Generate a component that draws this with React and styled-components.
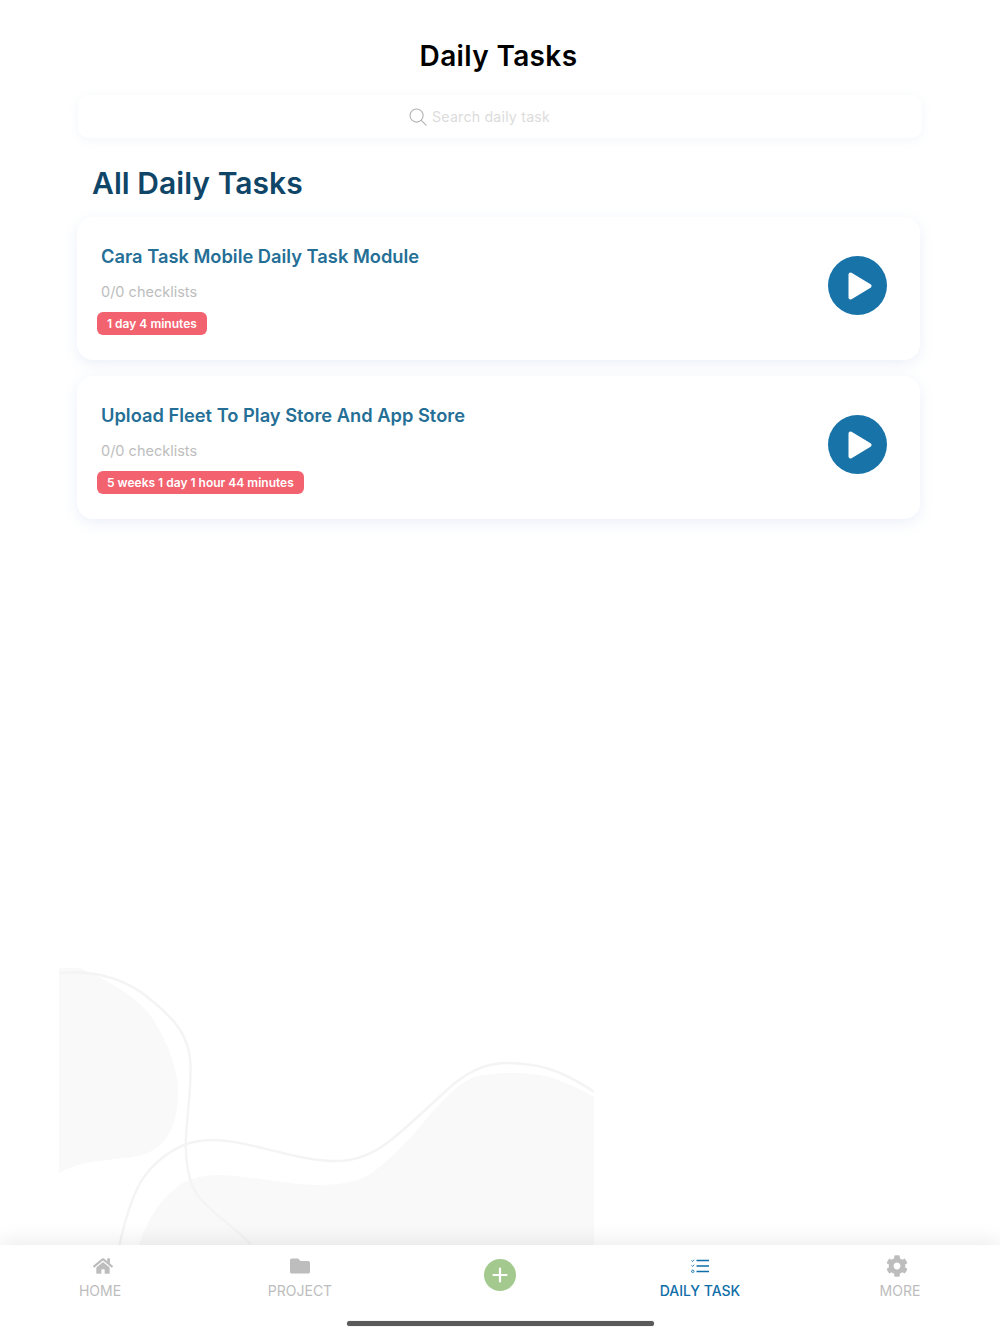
import React from "react";
import styled, { createGlobalStyle } from "styled-components";
import { FaHome, FaFolder, FaCog } from "react-icons/fa";

const GlobalStyle = createGlobalStyle`
  html, body {
    margin: 0;
    padding: 0;
    background: #fff;
    font-family: Inter, "Noto Sans", sans-serif;
  }
`;

const Page = styled.div`
  position: relative;
  width: 1000px;
  height: 1334px;
  overflow: hidden;
  display: flex;
  flex-direction: column;
  background: #fff;
`;

const Backdrop = styled.svg`
  position: absolute;
  left: 59px;
  top: 968px;
  width: 535px;
  height: 277px;
`;

const Main = styled.main`
  position: relative;
  flex: 1;
  display: flex;
  flex-direction: column;
  padding: 38px 80px 0 77px;
`;

const Title = styled.h1`
  margin: 0 0 19px;
  height: 38px;
  line-height: 37px;
  font-size: 28px;
  font-weight: 600;
  letter-spacing: 0.35px;
  text-align: center;
  color: #000;
`;

const Search = styled.div`
  height: 43px;
  margin: 0 -2px 0 1px;
  display: flex;
  align-items: center;
  justify-content: center;
  gap: 5px;
  padding-right: 41px;
  border-radius: 10px;
  background: #fff;
  box-shadow: 0 2px 10px rgba(150, 170, 200, 0.12);
  color: #dcdcdc;
  font-size: 14.2px;
  letter-spacing: 0.2px;
`;

const Heading = styled.h2`
  margin: 26px 0 15px 15px;
  height: 38px;
  line-height: 38px;
  font-size: 30px;
  font-weight: 600;
  letter-spacing: 0.05px;
  color: #0f4567;
`;

const Card = styled.section`
  height: 143px;
  margin-bottom: 16px;
  box-sizing: border-box;
  display: flex;
  align-items: flex-start;
  justify-content: space-between;
  padding: 25px 33px 0 20px;
  border-radius: 16px;
  background: #fff;
  box-shadow: 0 4px 14px rgba(130, 160, 210, 0.16);
`;

const CardBody = styled.div`
  display: flex;
  flex-direction: column;
  align-items: flex-start;
`;

const CardTitle = styled.h3`
  margin: 0 0 0 4px;
  line-height: 28px;
  font-size: 18.3px;
  font-weight: 600;
  color: #256f96;
`;

const Checklist = styled.div`
  margin: 11px 0 9px 4px;
  line-height: 22px;
  font-size: 14.5px;
  color: #bdbdbd;
`;

const Duration = styled.span`
  height: 23px;
  line-height: 23px;
  padding: 0 10px;
  border-radius: 6px;
  background: #f2626f;
  color: #fff;
  font-size: 12px;
  font-weight: 600;
`;

const PlayButton = styled.button`
  width: 59px;
  height: 59px;
  margin-top: 14px;
  padding: 0;
  border: 0;
  border-radius: 50%;
  background: #1873a9;
  display: flex;
  align-items: center;
  justify-content: center;
`;

const TabBar = styled.nav`
  position: relative;
  height: 89px;
  display: grid;
  grid-template-columns: repeat(5, 200px);
  background: #fff;
  box-shadow: 0 -4px 20px rgba(0, 0, 0, 0.08);
`;

const Tab = styled.div`
  display: flex;
  flex-direction: column;
  align-items: center;
  padding-top: 10px;
  color: ${(p) => (p.$active ? "#0f6da8" : "#bdbdbd")};
  font-size: 14px;
  font-weight: ${(p) => (p.$active ? 500 : 400)};
`;

const TabIcon = styled.div`
  height: 21px;
  display: flex;
  align-items: center;
  justify-content: center;
  margin-left: ${(p) => p.$shift || 0}px;
  margin-bottom: 6px;
  font-size: ${(p) => p.$size || 20}px;
`;

const AddTab = styled.div`
  display: flex;
  justify-content: center;
  padding: 14px 1px 0 0;
`;

const AddButton = styled.button`
  width: 32px;
  height: 32px;
  padding: 0;
  border: 0;
  border-radius: 50%;
  background: #a3c98f;
  display: flex;
  align-items: center;
  justify-content: center;
`;

const HomeBar = styled.div`
  position: absolute;
  left: 347px;
  top: 76px;
  width: 307px;
  height: 5px;
  border-radius: 3px;
  background: #5a5a5a;
  box-shadow: 0 0 1px #999;
`;

const tasks = [
  { id: 1, title: "Cara Task Mobile Daily Task Module", time: "1 day 4 minutes" },
  { id: 2, title: "Upload Fleet To Play Store And App Store", time: "5 weeks 1 day 1 hour 44 minutes" },
];

const ChecklistIcon = () => (
  <svg width="18" height="14" viewBox="0 0 18 14" fill="none" stroke="#0f6da8">
    <path d="M5.5 1.5H18M5.5 7H18M5.5 12.5H18" strokeWidth="1.3" />
    <path d="M0.5 1.5L1.5 2.5L3 0.7M0.5 6.5L1.5 7.5L3 5.7" strokeWidth="0.9" />
    <circle cx="1.8" cy="12.3" r="1.2" strokeWidth="0.9" />
  </svg>
);

const App = () => (
  <Page>
    <GlobalStyle />
    <Backdrop viewBox="59 968 535 277" fill="none">
      <path
        d="M59 968H80C102 978 132 992 151 1016C166 1040 178 1066 178 1093C178 1120 170 1137 158 1147C144 1158 122 1158 107 1160C88 1162 72 1165 59 1173Z"
        fill="#f9f9f9"
      />
      <path
        d="M139 1245C148 1218 160 1200 177 1187C190 1177 205 1175 221 1175C255 1176 290 1186 321 1185C342 1184 358 1183 373 1172C395 1156 412 1136 428 1117C446 1096 465 1076 484 1075C495 1073 505 1073 513.5 1073C530 1073 545 1075 558 1080C572 1085 584 1091 594 1097V1245Z"
        fill="#f9f9f9"
      />
      <path
        d="M59 973C70 972 84 972 95 974C118 978 136 987 151 1000C166 1012 178 1024 184 1037C189 1048 190.5 1058 190.5 1067C191 1092 187 1115 186 1137C185.5 1150 186 1160 188 1170C190 1181 193 1190 199 1197C215 1216 236 1228 251 1245"
        stroke="#f4f4f4"
        strokeWidth="2.5"
      />
      <path
        d="M119.5 1245C125 1220 131 1200 140 1183C150 1166 167 1152 184 1145C194 1141 204 1140 214 1140C230 1140 246 1144 262 1148C287 1154 312 1161 336 1161C357 1161 375 1153 391 1140C411 1124 428 1107 447 1090C465 1073 485 1063 506 1063C525 1063 543 1066 558 1072C572 1078 584 1085 594 1092"
        stroke="#f4f4f4"
        strokeWidth="2.5"
      />
    </Backdrop>
    <Main>
      <Title>Daily Tasks</Title>
      <Search>
        <svg width="18" height="18" viewBox="0 0 19 19" fill="none" stroke="#b4b4b4" strokeWidth="1.2">
          <circle cx="8" cy="8" r="6.9" />
          <path d="M13 13L18 18" strokeLinecap="round" />
        </svg>
        Search daily task
      </Search>
      <Heading>All Daily Tasks</Heading>
      {tasks.map((task) => (
        <Card key={task.id}>
          <CardBody>
            <CardTitle>{task.title}</CardTitle>
            <Checklist>0/0 checklists</Checklist>
            <Duration>{task.time}</Duration>
          </CardBody>
          <PlayButton aria-label="Start">
            <svg width="24" height="28" viewBox="0 0 24 28" style={{ marginLeft: 5 }}>
              <path d="M2.5 2.5L21.5 14L2.5 25.5Z" fill="#fff" stroke="#fff" strokeWidth="4" strokeLinejoin="round" />
            </svg>
          </PlayButton>
        </Card>
      ))}
    </Main>
    <TabBar>
      <Tab>
        <TabIcon $shift={6}><FaHome /></TabIcon>
        HOME
      </Tab>
      <Tab>
        <TabIcon><FaFolder /></TabIcon>
        PROJECT
      </Tab>
      <AddTab>
        <AddButton aria-label="Add">
          <svg width="16" height="16" viewBox="0 0 16 16" stroke="#fff" strokeWidth="2.2" strokeLinecap="round">
            <path d="M8 1.5V14.5M1.5 8H14.5" />
          </svg>
        </AddButton>
      </AddTab>
      <Tab $active>
        <TabIcon><ChecklistIcon /></TabIcon>
        DAILY TASK
      </Tab>
      <Tab>
        <TabIcon $shift={-7} $size={22}><FaCog /></TabIcon>
        MORE
      </Tab>
      <HomeBar />
    </TabBar>
  </Page>
);

export default App;
